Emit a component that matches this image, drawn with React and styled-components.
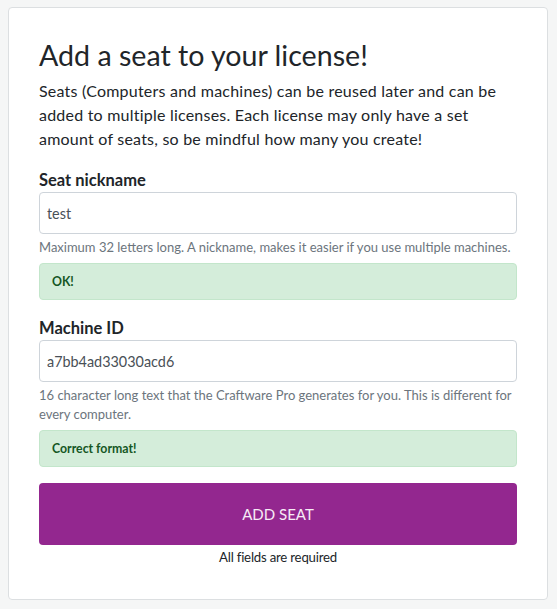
import React from "react";
import styled, { createGlobalStyle } from "styled-components";

const Global = createGlobalStyle`
  html, body { margin: 0; padding: 0; }
  body {
    background: #f5f6f6;
    font-family: "Lato", "Noto Sans", sans-serif;
    color: #212529;
  }
  * { box-sizing: border-box; }
`;

const Page = styled.div`
  padding: 7px 9px 9px 8px;
`;

const Card = styled.div`
  background: #fff;
  border: 1px solid #dcdfe1;
  border-radius: 4px;
  padding: 29px 30px 30px 30px;
  height: 593px;
`;

const Title = styled.h3`
  margin: 0 0 6px 0;
  font-size: 28.6px;
  font-weight: 400;
  line-height: 36px;
  color: #212529;
`;

const Lead = styled.p`
  margin: 0 0 17px 0;
  font-size: 16px;
  line-height: 24px;
  letter-spacing: 0.22px;
`;

const Group = styled.div`
  margin-bottom: 16px;
`;

const Label = styled.label`
  display: block;
  font-weight: 700;
  font-size: 16.5px;
  line-height: 24px;
  margin-bottom: 0;
`;

const Input = styled.input`
  display: block;
  width: 100%;
  height: 42px;
  padding: 0 7px;
  border: 1px solid #ced4da;
  border-radius: 4px;
  font-family: inherit;
  font-size: 14.4px;
  color: #495057;
  background: #fff;
  outline: none;
`;

const Help = styled.small`
  display: block;
  margin-top: 4px;
  font-size: 13px;
  line-height: 19px;
  color: #6c757d;
`;

const Alert = styled.div`
  margin-top: 6px;
  height: 37px;
  display: flex;
  align-items: center;
  padding: 0 12px;
  background: #d4edda;
  border: 1px solid #c3e6cb;
  border-radius: 4px;
  color: #155724;
  font-weight: 700;
  font-size: 12.3px;
`;

const Button = styled.button`
  display: block;
  width: 100%;
  height: 62px;
  margin-top: 1px;
  border: none;
  border-radius: 4px;
  background: #93278f;
  color: #f7ecf6;
  font-family: inherit;
  font-size: 15px;
  cursor: pointer;
`;

const Note = styled.div`
  text-align: center;
  font-size: 13.2px;
  letter-spacing: -0.2px;
  line-height: 20px;
  margin-top: 2px;
`;

export default function App() {
  return (
    <>
      <Global />
      <Page>
        <Card>
          <Title>Add a seat to your license!</Title>
          <Lead>
            Seats (Computers and machines) can be reused later and can be added
            to multiple licenses. Each license may only have a set amount of
            seats, so be mindful how many you create!
          </Lead>
          <Group>
            <Label>Seat nickname</Label>
            <Input defaultValue="test" />
            <Help>
              Maximum 32 letters long. A nickname, makes it easier if you use
              multiple machines.
            </Help>
            <Alert>OK!</Alert>
          </Group>
          <Group>
            <Label>Machine ID</Label>
            <Input defaultValue="a7bb4ad33030acd6" />
            <Help>
              16 character long text that the Craftware Pro generates for you.
              This is different for every computer.
            </Help>
            <Alert>Correct format!</Alert>
          </Group>
          <Button>ADD SEAT</Button>
          <Note>All fields are required</Note>
        </Card>
      </Page>
    </>
  );
}
